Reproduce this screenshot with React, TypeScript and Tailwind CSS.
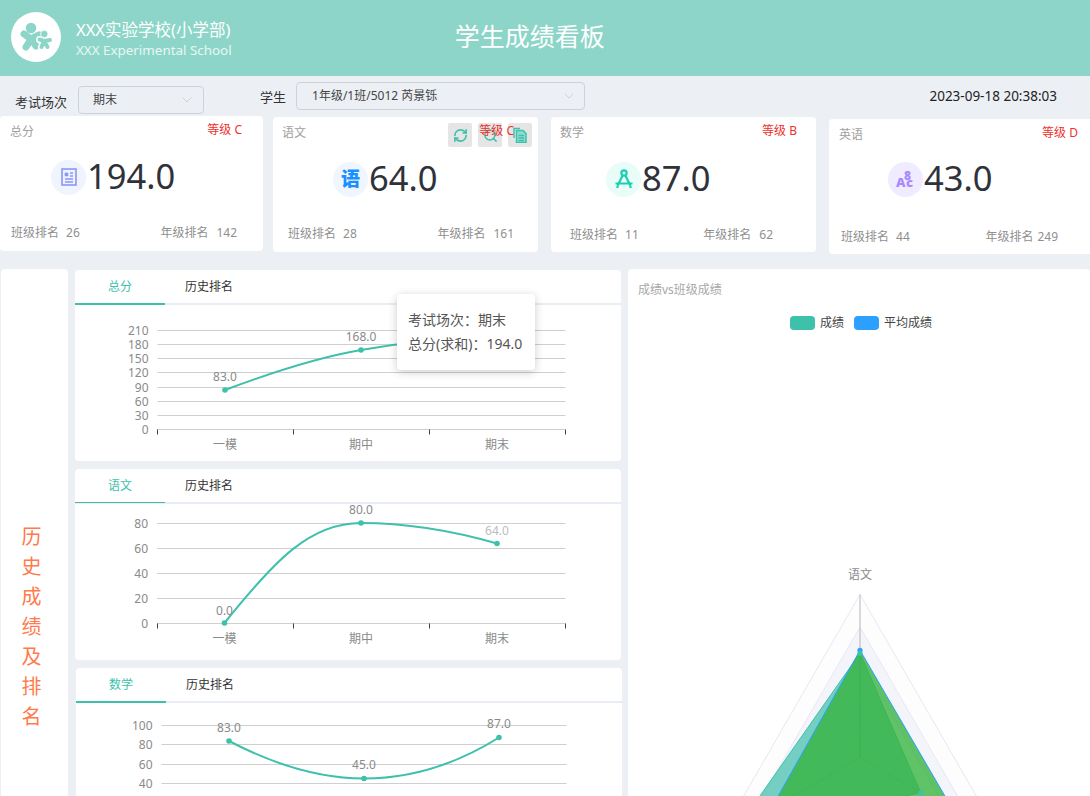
import React from "react";
import { ChevronDown, RefreshCw, Search } from "lucide-react";

const teal = "#3dc1ab";

const TotalIcon = () => (
  <svg width="16" height="18" viewBox="0 0 16 18" fill="none" stroke="#8b97f7">
    <rect x="1" y="1" width="14" height="16" strokeWidth="1.6" fill="#eef1fe" />
    <path d="M4 5h3v3H4z" fill="#8b97f7" strokeWidth="0.6" />
    <path d="M9 5h3M9 8h3M4 11h8M4 14h8" strokeWidth="1.3" />
  </svg>
);

const CompassIcon = () => (
  <svg width="20" height="22" viewBox="0 0 20 22" fill="none" stroke="#1ccfb3" strokeWidth="2.2">
    <circle cx="10" cy="5" r="2.6" />
    <path d="M8.6 7.4 3.5 18M11.4 7.4 16.5 18M1.5 15.5h17M3.5 18v2M16.5 18v2" />
  </svg>
);

const EnglishIcon = () => (
  <svg width="26" height="26" viewBox="0 0 26 26" fill="#a78bfa" fontWeight="900" fontFamily="'Noto Sans', sans-serif">
    <text x="3" y="21" fontSize="13">A</text>
    <text x="11" y="14" fontSize="12">8</text>
    <text x="13" y="21" fontSize="13">c</text>
  </svg>
);

const cards = [
  {
    title: "总分", grade: "等级 C", score: "194.0", classRank: "26", yearRank: "142",
    box: "w-[263px] h-[135px] mt-0 ml-0",
    head: "pl-[10px] pr-[21px] pt-[5px]",
    mid: "ml-[51px] mt-[12px]",
    foot: "pl-[11px] pr-[26px] mt-[23px]",
    yearGap: "ml-[8px]",
    circle: "bg-[#f0f4ff]",
    icon: <TotalIcon />,
  },
  {
    title: "语文", grade: "等级 C", score: "64.0", classRank: "28", yearRank: "161",
    box: "w-[265px] h-[135px] mt-[1px] ml-[10px]",
    head: "pl-[9px] pr-[24px] pt-[5px]",
    mid: "ml-[60px] mt-[13px]",
    foot: "pl-[15px] pr-[24px] mt-[22px]",
    yearGap: "ml-[8px]",
    circle: "bg-[#f0f6ff]",
    icon: <span className="text-[19px] leading-none font-black text-[#1890ff]">语</span>,
    tools: true,
  },
  {
    title: "数学", grade: "等级 B", score: "87.0", classRank: "11", yearRank: "62",
    box: "w-[265px] h-[135px] mt-[1px] ml-[13px]",
    head: "pl-[9px] pr-[19px] pt-[5px]",
    mid: "ml-[55px] mt-[13px]",
    foot: "pl-[19px] pr-[43px] mt-[23px]",
    yearGap: "ml-[8px]",
    circle: "bg-[#e8fcf8]",
    icon: <CompassIcon />,
  },
  {
    title: "英语", grade: "等级 D", score: "43.0", classRank: "44", yearRank: "249",
    box: "w-[270px] h-[135px] mt-[3px] ml-[13px]",
    head: "pl-[10px] pr-[21px] pt-[5px]",
    mid: "ml-[59px] mt-[11px]",
    foot: "pl-[12px] pr-[41px] mt-[25px]",
    yearGap: "ml-[4px]",
    circle: "bg-[#f0ebff]",
    icon: <EnglishIcon />,
  },
];

const Toolbox = () => (
  <div className="absolute left-[175px] top-[6px] flex gap-[6px]">
    <div className="w-6 h-6 rounded-[2px] bg-[#e5e5e5] flex items-center justify-center">
      <RefreshCw size={15} color={teal} strokeWidth={2.6} />
    </div>
    <div className="w-6 h-6 rounded-[2px] bg-[#e5e5e5] flex items-center justify-center">
      <Search size={15} color={teal} strokeWidth={2.4} />
    </div>
    <div className="w-6 h-6 rounded-[2px] bg-[#e5e5e5] flex items-center justify-center">
      <svg width="16" height="16" viewBox="0 0 16 16" fill="none" stroke={teal} strokeWidth="1.5">
        <path d="M2 11V1.5h6" />
        <path d="M4.5 3.5H11l3 3v9H4.5z" fill="#8fdccf" />
        <path d="M6.5 8.5h5.5M6.5 11h5.5M6.5 13.5h5.5" />
      </svg>
    </div>
  </div>
);

const ScoreCard = ({ card }: { card: (typeof cards)[number] }) => (
  <div className={`relative shrink-0 bg-white rounded-[4px] ${card.box}`}>
    {card.tools && <Toolbox />}
    <div className={`relative z-10 flex justify-between text-[12px] leading-[18px] ${card.head}`}>
      <span className="text-[#a0a0a0] mt-[2px]">{card.title}</span>
      <span className="text-[#f0302c]">{card.grade}</span>
    </div>
    <div className={`flex items-center ${card.mid}`}>
      <div className={`w-[35px] h-[35px] rounded-full flex items-center justify-center ${card.circle}`}>
        {card.icon}
      </div>
      <span className="ml-[1px] mb-[2px] text-[34.5px] leading-[46px] text-[#30323a]">{card.score}</span>
    </div>
    <div className={`flex justify-between text-[12px] leading-[18px] text-[#8f8f8f] ${card.foot}`}>
      <span>
        班级排名<span className="ml-[7px]">{card.classRank}</span>
      </span>
      <span>
        年级排名<span className={card.yearGap}>{card.yearRank}</span>
      </span>
    </div>
  </div>
);

type Pt = { x: number; y: number; label?: string; labelY?: number; light?: boolean };

type ChartProps = {
  tab: string;
  box: string;
  line: string;
  view: string;
  height: number;
  x0: number;
  x1: number;
  ticks: { v: string; y: number }[];
  curve: string;
  points: Pt[];
  cats?: { name: string; x: number }[];
  tickX?: number[];
  axisY?: number;
  children?: React.ReactNode;
};

const LineChart = ({ tab, box, line, view, height, x0, x1, ticks, curve, points, cats, tickX, axisY, children }: ChartProps) => (
  <div className={`relative bg-white rounded-[4px] h-[191px] overflow-hidden shrink-0 ${box}`}>
    <div className="flex h-[33px] items-center text-[12px]">
      <div className="w-[90px] text-center text-[#3dc1ab]">{tab}</div>
      <div className="ml-[20px] text-[#333]">历史排名</div>
    </div>
    <div className="h-[2px] bg-[#e9ecf5]">
      <div className={`w-[90px] bg-[#3dc1ab] ${line}`} />
    </div>
    <svg className="block" width="546" height={height} viewBox={view} fontSize="12" fontFamily="'Noto Sans', 'Noto Sans CJK SC', sans-serif">
      {ticks.map((t) => (
        <g key={t.v}>
          <line x1={x0} x2={x1} y1={t.y} y2={t.y} stroke="#cfcfcf" />
          <text x={x0 - 9} y={t.y + 4} textAnchor="end" fill="#8a8a8a">{t.v}</text>
        </g>
      ))}
      {tickX && tickX.map((x) => <line key={x} x1={x} x2={x} y1={axisY} y2={(axisY ?? 0) + 5} stroke="#444" />)}
      {cats && cats.map((c) => (
        <text key={c.name} x={c.x} y={(axisY ?? 0) + 19} textAnchor="middle" fill="#8a8a8a">{c.name}</text>
      ))}
      <path d={curve} fill="none" stroke={teal} strokeWidth="2" />
      {points.map((p) => (
        <g key={p.x}>
          <circle cx={p.x} cy={p.y} r="2.8" fill={teal} />
          {p.label && <text x={p.x} y={p.labelY} textAnchor="middle" fill={p.light ? "#bdbdbd" : "#8a8a8a"}>{p.label}</text>}
        </g>
      ))}
    </svg>
    {children}
  </div>
);

const cx = 860;
const cy = 757.7;
const R = 163.3;

const tri = (a: number, b: number, c: number) =>
  [
    [cx, cy - R * a],
    [cx + 0.866 * R * b, cy + 0.5 * R * b],
    [cx - 0.866 * R * c, cy + 0.5 * R * c],
  ]
    .map((p) => p.join(","))
    .join(" ");

const Radar = () => (
  <svg className="block" width="462" height="455" viewBox="628 341 462 455" fontFamily="'Noto Sans', 'Noto Sans CJK SC', sans-serif">
    <text x={cx} y="579" textAnchor="middle" fontSize="12" fill="#8a8a8a">语文</text>
    <polygon points={tri(1, 1, 1)} fill="#fdfdfe" stroke="#e6e8f3" />
    <polygon points={tri(0.8, 0.8, 0.8)} fill="#f4f5fb" stroke="#e6e8f3" />
    <polygon points={tri(0.6, 0.6, 0.6)} fill="#fdfdfe" stroke="#e6e8f3" />
    <polygon points={tri(0.4, 0.4, 0.4)} fill="#f4f5fb" stroke="#e6e8f3" />
    <polygon points={tri(0.2, 0.2, 0.2)} fill="#fdfdfe" stroke="#e6e8f3" />
    <line x1={cx} x2={cx} y1={cy - R} y2={cy} stroke="#b5b5b5" />
    <polygon points={tri(0.64, 0.43, 0.87)} fill="#3dbfa9" fillOpacity="0.7" stroke={teal} />
    <polygon points={tri(0.658, 0.667, 0.63)} fill="#35b23c" fillOpacity="0.78" stroke="#2d9fff" />
    <line x1={cx} x2={cx} y1={cy - 105} y2={cy} stroke="#35a94a" strokeOpacity="0.2" />
    <path d={`M${cx} ${cy}L${cx + 61} ${cy + 35}M${cx} ${cy}L${cx - 80} ${cy + 46}`} stroke="#35a94a" strokeOpacity="0.2" fill="none" />
    <circle cx={cx} cy={cy - R * 0.658} r="2.6" fill="#2d9fff" />
    <circle cx={cx} cy={cy - R * 0.64} r="2.6" fill={teal} />
    <circle cx={cx + 0.866 * R * 0.43} cy={cy + 0.5 * R * 0.43} r="2.6" fill={teal} />
  </svg>
);

const Logo = () => (
  <svg width="50" height="50" viewBox="11 12 50 50" className="shrink-0">
    <circle cx="36" cy="37" r="25" fill="#fff" />
    <g stroke="#8cd5c8" strokeLinecap="round" fill="none">
      <path d="M31 39 24 34M31 39 39 35M31 39 26 47M31 39 36 46" strokeWidth="7" />
    </g>
    <circle cx="31" cy="28" r="5.3" fill="#8cd5c8" />
    <g stroke="#fff" strokeLinecap="round" fill="none">
      <path d="M44 41 39.5 39.5M44 41 50 40M44 41 41.5 47M44 41 47.5 47" strokeWidth="7" />
    </g>
    <g stroke="#8cd5c8" strokeLinecap="round" fill="none">
      <path d="M44 41 39.5 39.5M44 41 50 40M44 41 41.5 47M44 41 47.5 47" strokeWidth="4" />
    </g>
    <circle cx="44.3" cy="34" r="3.7" fill="#8cd5c8" stroke="#fff" strokeWidth="0.8" />
  </svg>
);

const SelectBox = ({ text, box }: { text: string; box: string }) => (
  <div className={`flex items-center justify-between rounded-[4px] border border-[#cdd2da] text-[12px] text-[#444] ${box}`}>
    <span>{text}</span>
    <ChevronDown size={16} color="#c5c9d0" strokeWidth={1.2} />
  </div>
);

export default function App() {
  return (
    <div className="w-[1090px] h-[796px] overflow-hidden bg-[#ecf0f5] font-['Noto_Sans','Noto_Sans_CJK_SC',sans-serif]">
      {/* header */}
      <div className="relative h-[76px] bg-[#8cd5c8] flex items-center pl-[11px] pb-[2px] text-white">
        <Logo />
        <div className="ml-[15px] mt-[4px]">
          <div className="text-[16.5px] leading-[22px]">XXX实验学校(小学部)</div>
          <div className="text-[13.4px] leading-[18px] text-white/80">XXX Experimental School</div>
        </div>
        <div className="ml-[223px] mb-[2px] text-[25px] leading-[34px]">学生成绩看板</div>
      </div>

      {/* filters */}
      <div className="h-[40px] flex items-start text-[13px] text-[#333]">
        <span className="ml-[15px] mt-[17px] leading-[18px]">考试场次</span>
        <SelectBox text="期末" box="ml-[11px] mt-[10px] w-[126px] h-[28px] pl-[14px] pr-[8px]" />
        <span className="ml-[56px] mt-[12px] leading-[18px]">学生</span>
        <SelectBox text="1年级/1班/5012 芮景铄" box="ml-[10px] mt-[6px] w-[289px] h-[28px] pl-[15px] pr-[7px]" />
        <span className="ml-auto mr-[33px] mt-[11px] leading-[18px] text-[13.5px] text-[#222]">2023-09-18 20:38:03</span>
      </div>

      {/* score cards */}
      <div className="h-[153px] flex items-start">
        {cards.map((c) => (
          <ScoreCard key={c.title} card={c} />
        ))}
      </div>

      {/* lower area */}
      <div className="flex items-start">
        <div className="ml-[1px] w-[67px] h-[716px] shrink-0 bg-white rounded-[4px] flex items-center justify-center pr-[6px]">
          <div className="w-[20px] text-[20px] leading-[30px] text-[#ff7a4d] text-center">历史成绩及排名</div>
        </div>
        <div className="ml-[7px] mt-[1px] w-[547px] shrink-0 flex flex-col gap-[8px]">
          <LineChart
            tab="总分"
            box="w-[546px]"
            line="h-[2px]"
            view="75 305 546 156"
            height={156}
            x0={157.5}
            x1={565.5}
            ticks={[
              { v: "210", y: 330.5 },
              { v: "180", y: 344.5 },
              { v: "150", y: 358.5 },
              { v: "120", y: 372.5 },
              { v: "90", y: 387.5 },
              { v: "60", y: 401.5 },
              { v: "30", y: 415.5 },
              { v: "0", y: 429.5 },
            ]}
            curve="M225 390C270 373 315 358 361 350C406 342 452 338 497 338"
            points={[
              { x: 225, y: 390, label: "83.0", labelY: 381 },
              { x: 361, y: 350, label: "168.0", labelY: 341 },
              { x: 497, y: 338 },
            ]}
            cats={[
              { name: "一模", x: 225 },
              { name: "期中", x: 361 },
              { name: "期末", x: 497 },
            ]}
            tickX={[157.5, 293.5, 429.5, 565.5]}
            axisY={429.5}
          >
            <div className="absolute left-[322px] top-[24px] w-[138px] h-[76px] rounded-[4px] bg-white shadow-[0_2px_10px_rgba(0,0,0,0.2)] pl-[11px] pt-[14px] text-[14px] leading-[24px] text-[#555]">
              <div>考试场次：期末</div>
              <div className="whitespace-nowrap">总分(求和)：194.0</div>
            </div>
          </LineChart>
          <LineChart
            tab="语文"
            box="w-[546px]"
            line="h-[1px]"
            view="75 504 546 156"
            height={156}
            x0={157}
            x1={565.5}
            ticks={[
              { v: "80", y: 523.5 },
              { v: "60", y: 548.5 },
              { v: "40", y: 573.5 },
              { v: "20", y: 598.5 },
              { v: "0", y: 623.5 },
            ]}
            curve="M224.5 623C275 560 310 523 361 523C405 523 450 530 497 543.5"
            points={[
              { x: 224.5, y: 623, label: "0.0", labelY: 615 },
              { x: 361, y: 523, label: "80.0", labelY: 514 },
              { x: 497, y: 543.5, label: "64.0", labelY: 535, light: true },
            ]}
            cats={[
              { name: "一模", x: 224.5 },
              { name: "期中", x: 361 },
              { name: "期末", x: 497 },
            ]}
            tickX={[157.5, 293.5, 429.5, 565.5]}
            axisY={623.5}
          />
          <LineChart
            tab="数学"
            box="w-[546px] ml-[1px]"
            line="h-[2px]"
            view="76 703 546 156"
            height={156}
            x0={161.5}
            x1={566.5}
            ticks={[
              { v: "100", y: 725.5 },
              { v: "80", y: 744.5 },
              { v: "60", y: 764.5 },
              { v: "40", y: 783.5 },
            ]}
            curve="M229 741C275 765 320 778.5 364 778.5C410 778.5 455 765 499 737.5"
            points={[
              { x: 229, y: 741, label: "83.0", labelY: 732 },
              { x: 364, y: 778.5, label: "45.0", labelY: 769 },
              { x: 499, y: 737.5, label: "87.0", labelY: 728 },
            ]}
          />
        </div>
        <div className="ml-[6px] w-[462px] h-[716px] shrink-0 bg-white rounded-[4px]">
          <div className="pl-[10px] pt-[12px] h-[47px] text-[12px] leading-[18px] text-[#a8a8a8]">成绩vs班级成绩</div>
          <div className="h-[25px] pl-[4px] flex items-start justify-center text-[12px] leading-[14px] text-[#444]">
            <span className="w-[25px] h-[14px] rounded-[4px] bg-[#3dc1ab]" />
            <span className="ml-[5px] mr-[10px]">成绩</span>
            <span className="w-[25px] h-[14px] rounded-[4px] bg-[#2d9fff]" />
            <span className="ml-[5px]">平均成绩</span>
          </div>
          <Radar />
        </div>
      </div>
    </div>
  );
}
